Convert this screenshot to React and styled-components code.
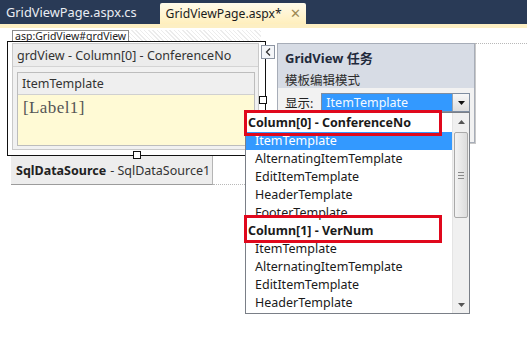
import styled, { createGlobalStyle } from "styled-components";

const GlobalStyle = createGlobalStyle`
  *, *::before, *::after {
    box-sizing: border-box;
  }
  html, body {
    margin: 0;
    padding: 0;
    background: #ffffff;
  }
  body {
    font-family: "Noto Sans", "Noto Sans CJK SC", sans-serif;
    color: #1e1e1e;
  }
`;

const UI_FONT = `"Noto Sans", "Noto Sans CJK SC", sans-serif`;

const Page = styled.div`
  position: relative;
  width: 527px;
  height: 345px;
  overflow: hidden;
  background: #ffffff;
`;

const TabBar = styled.div`
  height: 24px;
  background: #293a56;
  display: flex;
  align-items: flex-end;
  padding-left: 5px;
  gap: 23px;
`;

const Tab = styled.div`
  height: ${(p) => (p.$active ? "21px" : "24px")};
  display: flex;
  align-items: center;
  gap: 8px;
  padding: ${(p) => (p.$active ? "0 5px 0 6px" : "0 0 0 1px")};
  border-radius: 2px 2px 0 0;
  background: ${(p) =>
    p.$active ? "linear-gradient(#fffbea, #ffefbd)" : "transparent"};
  color: ${(p) => (p.$active ? "#1b1b1b" : "#e9edf3")};
  font-family: ${UI_FONT};
  font-size: ${(p) => (p.$active ? "12.2px" : "12.8px")};
  white-space: nowrap;
`;

const CloseX = styled.span`
  font-size: 13px;
  color: #9d8a55;
  line-height: 1;
`;

const Strip = styled.div`
  height: 4px;
  background: #fdefc3;
`;

const Surface = styled.div`
  padding: 2px 0 0 7px;
`;

const TagRow = styled.div`
  display: flex;
  height: 11px;
  padding-left: 5px;
`;

const Tag = styled.div`
  border: 1px solid #8a8a8a;
  border-bottom: none;
  padding: 0 2px;
  font-family: ${UI_FONT};
  font-size: 10.5px;
  line-height: 10px;
  color: #222;
  background: #fff;
`;

const Hatch = styled.div`
  width: 132px;
  background: repeating-linear-gradient(
    45deg,
    #ececec 0px,
    #ececec 1px,
    #ffffff 1px,
    #ffffff 3px
  );
`;

const Frame = styled.div`
  position: relative;
  width: 259px;
  height: 115px;
  border: 1px solid #111;
  background: #fff;
  padding: 1px 5px 0 4px;
`;

const ColumnPanel = styled.div`
  width: 247px;
  height: 107px;
  background: #f1f1f1;
  border: 1px solid #c9c9c9;
  display: flex;
  flex-direction: column;
`;

const ColumnHeader = styled.div`
  height: 23px;
  display: flex;
  align-items: center;
  padding-left: 4px;
  background: #ececec;
  border-bottom: 1px solid #d4d4d4;
  font-family: ${UI_FONT};
  font-size: 12.5px;
  color: #333;
  white-space: nowrap;
`;

const TemplateBox = styled.div`
  margin: 5px 3px 0 4px;
  height: 74px;
  border: 1px solid #bdbdbd;
  display: flex;
  flex-direction: column;
`;

const TemplateHead = styled.div`
  height: 22px;
  display: flex;
  align-items: center;
  padding-left: 4px;
  background: #efefef;
  border-bottom: 1px solid #d0d0d0;
  font-family: ${UI_FONT};
  font-size: 12.5px;
  color: #333;
`;

const TemplateBody = styled.div`
  flex: 1;
  background: #fffad5;
  padding: 3px 5px;
  font-family: "Liberation Serif", serif;
  font-size: 17px;
  color: #555;
  letter-spacing: 0.4px;
`;

const Handle = styled.div`
  position: absolute;
  width: 8px;
  height: 8px;
  border: 1px solid #111;
  background: #fff;
  left: ${(p) => p.$x}px;
  top: ${(p) => p.$y}px;
`;

const SourceRow = styled.div`
  display: flex;
  align-items: flex-end;
  padding-left: 4px;
`;

const SourceBox = styled.div`
  width: 202px;
  height: 29px;
  background: #ededed;
  border-right: 1px solid #b5b5b5;
  border-bottom: 1px solid #9c9c9c;
  display: flex;
  align-items: center;
  padding-left: 5px;
  font-family: ${UI_FONT};
  font-size: 12.5px;
  color: #333;
  white-space: nowrap;
  b {
    font-weight: 700;
    color: #222;
    margin-right: 4px;
  }
`;

const DottedLine = styled.div`
  width: ${(p) => p.$w}px;
  border-bottom: 1px dotted #b8b8b8;
  align-self: ${(p) => (p.$top ? "flex-start" : "flex-end")};
`;

const SmartTag = styled.div`
  position: absolute;
  left: 261px;
  top: 43px;
  display: flex;
  align-items: flex-start;
`;

const ArrowBtn = styled.div`
  width: 14px;
  height: 14px;
  margin-top: 2px;
  margin-right: 2px;
  border: 1px solid #8d95a3;
  background: #f4f6f9;
  display: grid;
  place-items: center;
`;

const TaskPanel = styled.div`
  width: 198px;
  height: 100px;
  border: 1px solid #a7adb8;
  background: #f2f2f2;
  box-shadow: 1px 1px 0 #c8c8c8;
  display: flex;
  flex-direction: column;
`;

const TaskHead = styled.div`
  height: 44px;
  background: #d7dce5;
  padding: 4px 0 0 7px;
  font-family: ${UI_FONT};
  display: flex;
  flex-direction: column;
  gap: 3px;
`;

const TaskTitle = styled.div`
  font-size: 13px;
  font-weight: 700;
  color: #1f2a3c;
`;

const TaskSub = styled.div`
  font-size: 12.5px;
  color: #2c2c2c;
`;

const TaskBody = styled.div`
  display: flex;
  align-items: center;
  padding: 5px 4px 0 7px;
  gap: 8px;
  font-family: ${UI_FONT};
  font-size: 12.5px;
  color: #222;
  white-space: nowrap;
`;

const Select = styled.div`
  flex-shrink: 0;
  display: flex;
  height: 19px;
  width: 149px;
  border: 1px solid #7f8da0;
`;

const SelectValue = styled.div`
  flex: 1;
  background: #3399ff;
  color: #f4f9ff;
  padding-left: 4px;
  font-size: 12.5px;
  line-height: 17px;
`;

const SelectBtn = styled.div`
  width: 17px;
  border-left: 1px solid #9aa3ad;
  background: linear-gradient(#f7f7f7, #dedede);
  display: grid;
  place-items: center;
`;

const ListBox = styled.div`
  position: absolute;
  left: 245px;
  top: 112px;
  width: 225px;
  height: 202px;
  border: 1px solid #7a7f87;
  background: #fff;
  display: flex;
`;

const Items = styled.div`
  flex: 1;
  padding-top: 1px;
  display: flex;
  flex-direction: column;
`;

const Item = styled.div`
  height: 18px;
  line-height: 18px;
  padding-left: ${(p) => (p.$group ? "2px" : "9px")};
  font-family: ${UI_FONT};
  font-size: 12.5px;
  font-weight: ${(p) => (p.$group ? 700 : 400)};
  background: ${(p) => (p.$selected ? "#3399ff" : "transparent")};
  color: ${(p) => (p.$selected ? "#ffffff" : "#1a1a1a")};
  white-space: nowrap;
  overflow: hidden;
`;

const ScrollBar = styled.div`
  width: 17px;
  background: #f0f0f0;
  border-left: 1px solid #e4e4e4;
  display: flex;
  flex-direction: column;
`;

const ScrollArrow = styled.div`
  height: 17px;
  display: grid;
  place-items: center;
`;

const Thumb = styled.div`
  height: 86px;
  margin: 2px 1px 0 1px;
  border: 1px solid #a9a9a9;
  border-radius: 2px;
  background: linear-gradient(90deg, #f3f3f3, #dcdcdc);
  display: flex;
  flex-direction: column;
  align-items: center;
  justify-content: center;
  gap: 2px;
`;

const Grip = styled.div`
  width: 6px;
  height: 1px;
  background: #8a8a8a;
`;

const Track = styled.div`
  flex: 1;
`;

const Highlight = styled.div`
  position: absolute;
  left: ${(p) => p.$x}px;
  top: ${(p) => p.$y}px;
  width: ${(p) => p.$w}px;
  height: ${(p) => p.$h}px;
  border: 3px solid #e0081c;
`;

const Tri = ({ up, color = "#111" }) => (
  <svg width="7" height="4" viewBox="0 0 7 4">
    <path d={up ? "M0 4 L3.5 0 L7 4 Z" : "M0 0 L7 0 L3.5 4 Z"} fill={color} />
  </svg>
);

const groups = [
  { title: "Column[0] - ConferenceNo" },
  { title: "Column[1] - VerNum" },
];

const templates = [
  "ItemTemplate",
  "AlternatingItemTemplate",
  "EditItemTemplate",
  "HeaderTemplate",
  "FooterTemplate",
];

export default function App() {
  const rows = [];
  groups.forEach((g, gi) => {
    rows.push({ text: g.title, group: true });
    const list = gi === 0 ? templates : templates.slice(0, 4);
    list.forEach((t, ti) =>
      rows.push({ text: t, selected: gi === 0 && ti === 0 })
    );
  });

  return (
    <>
      <GlobalStyle />
      <Page>
        <TabBar>
          <Tab>GridViewPage.aspx.cs</Tab>
          <Tab $active>
            GridViewPage.aspx*
            <CloseX>✕</CloseX>
          </Tab>
        </TabBar>
        <Strip />

        <Surface>
          <TagRow>
            <Tag>asp:GridView#grdView</Tag>
            <Hatch />
          </TagRow>
          <Frame>
            <ColumnPanel>
              <ColumnHeader>grdView - Column[0] - ConferenceNo</ColumnHeader>
              <TemplateBox>
                <TemplateHead>ItemTemplate</TemplateHead>
                <TemplateBody>[Label1]</TemplateBody>
              </TemplateBox>
            </ColumnPanel>
            <Handle $x={251} $y={54} />
            <Handle $x={125} $y={109} />
          </Frame>
          <SourceRow>
            <SourceBox>
              <b>SqlDataSource</b> - SqlDataSource1
            </SourceBox>
            <DottedLine $w={40} />
          </SourceRow>
        </Surface>

        <SmartTag>
          <ArrowBtn>
            <svg width="6" height="8" viewBox="0 0 6 8">
              <path d="M5 0.5 L1.5 4 L5 7.5" stroke="#333" strokeWidth="1.3" fill="none" />
            </svg>
          </ArrowBtn>
          <TaskPanel>
            <TaskHead>
              <TaskTitle>GridView 任务</TaskTitle>
              <TaskSub>模板编辑模式</TaskSub>
            </TaskHead>
            <TaskBody>
              显示:
              <Select>
                <SelectValue>ItemTemplate</SelectValue>
                <SelectBtn>
                  <Tri />
                </SelectBtn>
              </Select>
            </TaskBody>
          </TaskPanel>
          <DottedLine $w={60} $top />
        </SmartTag>

        <ListBox>
          <Items>
            {rows.map((r, i) => (
              <Item key={i} $group={r.group} $selected={r.selected}>
                {r.text}
              </Item>
            ))}
          </Items>
          <ScrollBar>
            <ScrollArrow>
              <Tri up color="#555" />
            </ScrollArrow>
            <Thumb>
              <Grip />
              <Grip />
              <Grip />
            </Thumb>
            <Track />
            <ScrollArrow>
              <Tri color="#555" />
            </ScrollArrow>
          </ScrollBar>
        </ListBox>

        <Highlight $x={244} $y={110} $w={198} $h={26} />
        <Highlight $x={244} $y={215} $w={198} $h={28} />
      </Page>
    </>
  );
}
